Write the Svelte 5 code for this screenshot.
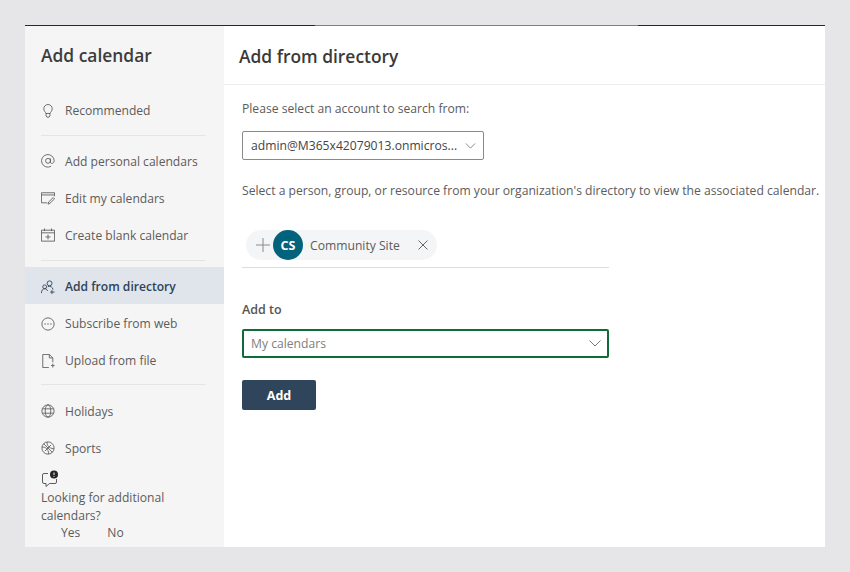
<script>
  const groups = [
    [{ label: 'Recommended', icon: 'bulb' }],
    [
      { label: 'Add personal calendars', icon: 'at' },
      { label: 'Edit my calendars', icon: 'edit' },
      { label: 'Create blank calendar', icon: 'blank' }
    ],
    [
      { label: 'Add from directory', icon: 'people', active: true },
      { label: 'Subscribe from web', icon: 'web' },
      { label: 'Upload from file', icon: 'file' }
    ],
    [
      { label: 'Holidays', icon: 'globe' },
      { label: 'Sports', icon: 'ball' }
    ]
  ];
</script>

{#snippet icon(name)}
  <svg class="icon" viewBox="0 0 16 16" fill="none" stroke="currentColor" stroke-width="1">
    {#if name === 'bulb'}
      <path d="M5.6 10.800C5.200 9.200 3.200 8 3.200 5.400a4.800 4.800 0 0 1 9.600 0c0 2.600-2 3.800-2.400 5.400z" />
      <path d="M5.800 10.800v2.700l1 1.500h2.400l1-1.500v-2.700" />
    {:else if name === 'at'}
      <circle cx="8" cy="7.800" r="2.800" />
      <path d="M10.800 5v4.400c0 2 4.200 2 4.200-1.600A7.200 7.200 0 1 0 11.500 14" />
    {:else if name === 'edit'}
      <path d="M7 13.500H.5V2h15v4" />
      <path d="M.5 4.500h15M8 15l.7-2.500 5.300-5 1.500 1.500-5.300 5z" />
    {:else if name === 'blank'}
      <path d="M.5 2.500h15v12.500H.5zM.5 5.500h15M4 .5v3M12 .5v3M8 7.500v5.500M5.200 10.200h5.600" />
    {:else if name === 'people'}
      <circle cx="9.800" cy="3.800" r="2.800" />
      <circle cx="4.200" cy="7.800" r="2.200" />
      <path d="M.5 15c0-3.200 1.500-5 3.700-5 1.600 0 2.800.9 3.300 2.500M7.800 7.500c2.800-1 5.500.5 6 3.500M12.500 11.500v4.500M10.500 13.800h5" />
    {:else if name === 'web'}
      <circle cx="8" cy="8" r="7" />
      <path d="M3.800 8h1.800M7.100 8h1.800M10.400 8h1.800" />
    {:else if name === 'file'}
      <path d="M9 15.500H2v-15h7.500l4 4v5M9.500.5V4.500h4M13.500 11v4.500M11.500 13.200h4" />
    {:else if name === 'globe'}
      <circle cx="8" cy="8" r="7" />
      <ellipse cx="8" cy="8" rx="3.200" ry="7" />
      <path d="M1.600 5.500h12.800M1.600 10.500h12.800" />
    {:else}
      <circle cx="8" cy="8" r="7" />
      <path d="M3 3l10 10M7 1.200c-.5 3.300 1.500 7 7.800 7.800M1.200 7c3.300-.5 7 1.500 7.800 7.800M4.500 11.500l7-7" />
    {/if}
  </svg>
{/snippet}

<div class="page">
  <div class="dialog">
    <aside class="side">
      <h2>Add calendar</h2>
      <nav>
        {#each groups as group, g}
          {#if g > 0}<div class="rule"></div>{/if}
          <ul>
            {#each group as item}
              <li class:active={item.active}>
                {@render icon(item.icon)}
                <span>{item.label}</span>
              </li>
            {/each}
          </ul>
        {/each}
      </nav>
      <div class="feedback">
        <div class="bubble">
          <svg viewBox="0 0 18 18" fill="none" stroke="currentColor" stroke-width="1">
            <path d="M7 3.500H3a1.500 1.500 0 0 0-1.500 1.500v7A1.500 1.500 0 0 0 3 13.500h2v3l3.500-3H14a1.500 1.500 0 0 0 1.500-1.500V9" />
            <circle cx="13" cy="4.500" r="4" fill="#252525" stroke="none" />
            <path d="M13 2.500v2.600M13 6v.8" stroke="#fff" />
          </svg>
        </div>
        <p>Looking for additional calendars?</p>
        <div class="answers"><span>Yes</span><span>No</span></div>
      </div>
    </aside>

    <main class="content">
      <header><h1>Add from directory</h1></header>
      <div class="body">
        <p class="prompt">Please select an account to search from:</p>
        <div class="select account">
          <span>admin@M365x42079013.onmicros...</span>
          <svg viewBox="0 0 12 7"><path d="M.5.500 6 6l5.500-5.500" /></svg>
        </div>
        <p class="help">Select a person, group, or resource from your organization's directory to view the associated calendar.</p>
        <div class="picker">
          <div class="chip">
            <svg class="plus" viewBox="0 0 14 14"><path d="M7 0v14M0 7h14" /></svg>
            <span class="avatar">CS</span>
            <span class="name">Community Site</span>
            <svg class="close" viewBox="0 0 10 10"><path d="M.5.500l9 9M9.500.500l-9 9" /></svg>
          </div>
        </div>
        <label for="target">Add to</label>
        <div class="select target" id="target">
          <span>My calendars</span>
          <svg viewBox="0 0 12 7"><path d="M.5.500 6 6l5.500-5.500" /></svg>
        </div>
        <button type="button">Add</button>
      </div>
    </main>
  </div>
</div>

<style>
  :global(body) {
    margin: 0;
    background: #e6e6e8;
  }

  .page {
    height: 572px;
    padding: 25px;
    box-sizing: border-box;
    font-family: "Open Sans", "Liberation Sans", sans-serif;
    color: #444;
  }

  .dialog {
    display: flex;
    height: 522px;
    background: #fff;
    border-top: 1px solid;
    border-image: linear-gradient(to right, #1c2b3a 290px, #808080 290px, #808080 612px, #1c2b3a 612px) 1;
    box-sizing: border-box;
  }

  .side {
    width: 199px;
    flex: none;
    background: #f5f5f5;
    display: flex;
    flex-direction: column;
  }

  h2 {
    margin: 18px 0 0 16px;
    font-size: 17.4px;
    line-height: 22px;
    font-weight: 600;
    color: #3c3c3c;
  }

  nav {
    margin-top: 26px;
  }

  ul {
    list-style: none;
    margin: 0;
    padding: 0;
  }

  li {
    display: flex;
    align-items: center;
    box-sizing: border-box;
    height: 37px;
    padding-left: 16px;
    font-size: 12.1px;
    color: #5c5c5c;
  }

  ul:nth-of-type(n+3) li {
    padding-top: 2px;
  }

  li.active {
    background: #dfe5eb;
    color: #2f4258;
    font-weight: 600;
  }

  .icon {
    width: 14px;
    height: 14px;
    margin-right: 10px;
    flex: none;
  }

  .rule {
    height: 1px;
    margin: 6px 19px 6.5px 16px;
    background: #e4e4e4;
  }

  .feedback {
    margin: 4px 0 0 16px;
    font-size: 12.1px;
    line-height: 18px;
    color: #5c5c5c;
  }

  .bubble svg {
    display: block;
    width: 18px;
    height: 18px;
  }

  .feedback p {
    width: 150px;
    margin-top: 1px;
  }

  .answers {
    display: flex;
    gap: 27px;
    margin-top: -1px;
    padding-left: 20px;
  }

  .content {
    flex: 1;
    min-width: 0;
  }

  header {
    height: 56px;
    border-bottom: 1px solid #eee;
    display: flex;
    align-items: center;
    padding: 2px 0 0 15px;
  }

  h1 {
    margin: 0;
    font-size: 17.4px;
    font-weight: 600;
    color: #3a3a3a;
  }

  .body {
    padding: 15px 0 0 18px;
    font-size: 12.15px;
    color: #5c5c5c;
  }

  p {
    margin: 0;
  }

  .prompt {
    line-height: 18px;
  }

  .select {
    display: flex;
    align-items: center;
    justify-content: space-between;
    box-sizing: border-box;
    background: #fff;
  }

  .select svg {
    width: 11px;
    height: 6px;
    fill: none;
    stroke: #777;
    stroke-width: 1;
    flex: none;
  }

  .account {
    width: 242px;
    height: 29px;
    margin-top: 13px;
    padding: 0 7px 0 8px;
    border: 1px solid #8a8a8a;
    border-radius: 2px;
    color: #444;
  }

  .help {
    margin-top: 22px;
    line-height: 18px;
    white-space: nowrap;
  }

  .picker {
    width: 367px;
    height: 37px;
    margin-top: 30px;
    border-bottom: 1px solid #ddd;
  }

  .chip {
    display: flex;
    align-items: center;
    height: 30px;
    padding-left: 10px;
    margin-left: 4px;
    border-radius: 15px;
    background: #f4f5f7;
    width: 191px;
    box-sizing: border-box;
  }

  .plus {
    width: 14px;
    height: 14px;
    fill: none;
    stroke: #8a8a8a;
    stroke-width: 1;
    flex: none;
  }

  .avatar {
    width: 30px;
    height: 30px;
    margin-left: 3px;
    border-radius: 50%;
    background: #03627c;
    color: #fff;
    font-weight: 700;
    font-size: 12.5px;
    display: flex;
    align-items: center;
    justify-content: center;
    flex: none;
  }

  .name {
    margin-left: 7px;
    color: #5c5c5c;
  }

  .close {
    width: 10px;
    height: 10px;
    margin-left: auto;
    margin-right: 9px;
    fill: none;
    stroke: #666;
    stroke-width: 1;
    flex: none;
  }

  label {
    display: block;
    margin-top: 33px;
    font-weight: 600;
    font-size: 12.5px;
    line-height: 18px;
    color: #555;
  }

  .target {
    width: 367px;
    height: 29px;
    margin-top: 10px;
    padding: 0 6px 0 7px;
    border: 2px solid #0f6b3a;
    border-radius: 2px;
    color: #808080;
  }

  .target svg {
    width: 12px;
    height: 7px;
  }

  button {
    display: block;
    width: 74px;
    height: 30px;
    margin-top: 22px;
    border: none;
    border-radius: 2px;
    background: #2f455c;
    color: #fff;
    font: 700 12.5px "Open Sans", "Liberation Sans", sans-serif;
  }
</style>
